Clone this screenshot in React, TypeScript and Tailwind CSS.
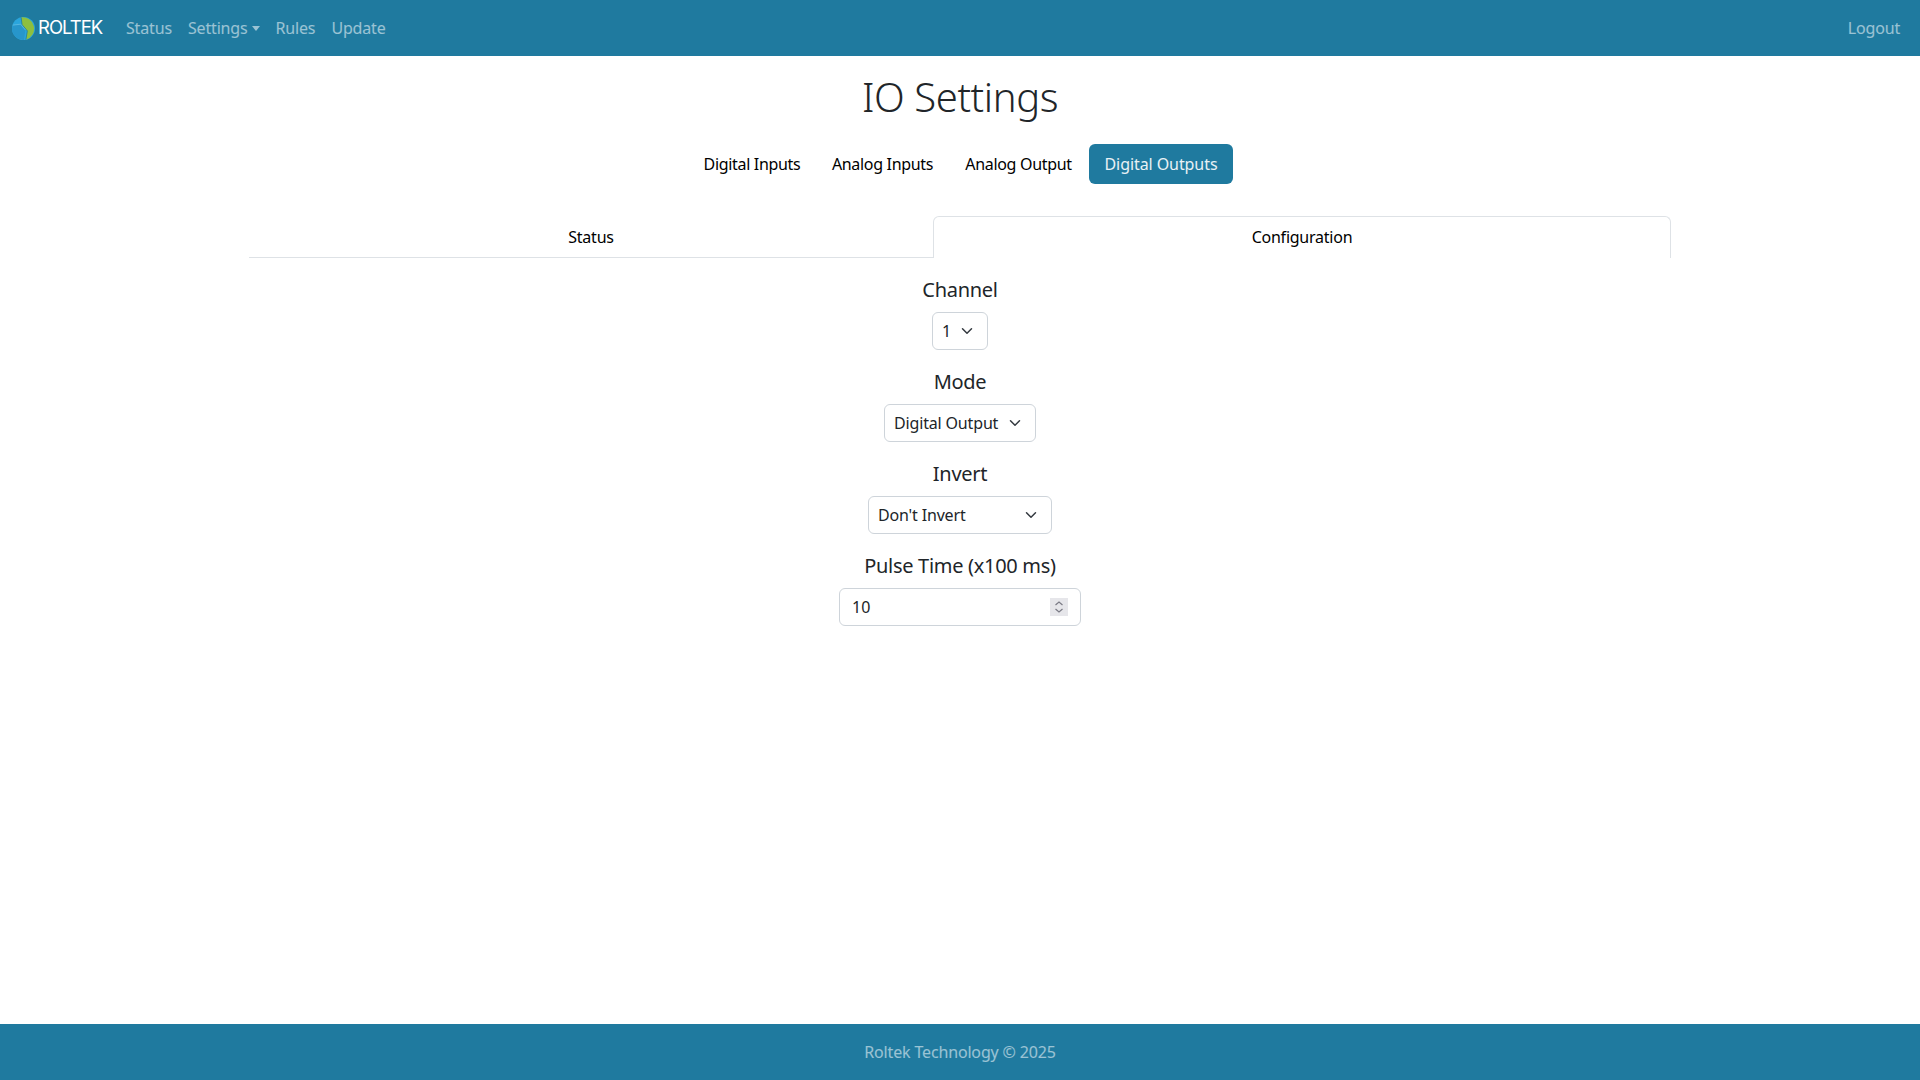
import React from "react";

const FONT = "font-['Noto_Sans','Open_Sans',sans-serif]";

function Chevron({ className = "" }: { className?: string }) {
  return (
    <svg viewBox="0 0 16 16" className={"w-4 h-3 " + className} fill="none" stroke="#343a40" strokeWidth="2" strokeLinecap="round" strokeLinejoin="round">
      <path d="m2 5 6 6 6-6" />
    </svg>
  );
}

function Logo() {
  return (
    <svg viewBox="0 0 24 24" className="w-[23px] h-[23px] shrink-0">
      <circle cx="12" cy="12" r="12" fill="#2aa5dc" />
      <path d="M0.8 8.5 9 7.5 14 13.5 12.5 24A12 12 0 0 1 0 12Z" fill="#2796cb" />
      <path d="M9.5 0.3A12 12 0 0 1 14.5 23.7L16 14.5 10.5 8Z" fill="#8dbf3f" />
      <path d="M9.5 0.3 10.5 8 16 14.5 14.5 23.7" fill="none" stroke="#1f7a9f" strokeWidth="0.8" />
      <path d="M0.8 8.5 9 7.5 14 13.5" fill="none" stroke="#6cc3e8" strokeWidth="0.7" />
    </svg>
  );
}

function NavLink({ children }: { children: React.ReactNode }) {
  return <a className="px-2 py-2 text-white/55 leading-6 text-base tracking-[-0.01em]">{children}</a>;
}

function Pill({ label, active, w }: { label: string; active?: boolean; w: string }) {
  return (
    <a className={"h-10 flex items-center justify-center rounded-md text-base " + w + " " + (active ? "bg-[#1f7a9f] text-white/90 tracking-[-0.005em]" : "text-black tracking-[-0.02em]")}>
      {label}
    </a>
  );
}

function Field({ label, children }: { label: string; children: React.ReactNode }) {
  return (
    <div className="flex flex-col items-center mb-4">
      <label className="text-xl leading-[30px] pt-[1px] mb-[7px] tracking-[-0.015em] text-[#212529]">{label}</label>
      {children}
    </div>
  );
}

function Select({ value, w }: { value: string; w: string }) {
  return (
    <div className={"h-[38px] flex items-center justify-between pl-[9px] pr-[12px] border border-[#ced4da] rounded-md text-base tracking-[-0.01em] text-[#212529] bg-white " + w}>
      <span>{value}</span>
      <Chevron />
    </div>
  );
}

export default function App() {
  return (
    <div className={"min-h-screen h-[1080px] flex flex-col bg-white " + FONT}>
      <nav className="h-14 bg-[#1f7a9f] flex items-center pl-3 pr-3 shrink-0">
        <a className="flex items-center mr-2">
          <Logo />
          <span className="text-white text-[18.5px] ml-[3px] tracking-[-1px] font-['Inter',sans-serif] font-normal w-[64px]">ROLTEK</span>
        </a>
        <div className="flex items-center ml-2">
          <NavLink>Status</NavLink>
          <a className="px-2 py-2 text-white/55 leading-6 text-base tracking-[-0.01em] flex items-center">
            Settings
            <span className="ml-[4px] w-0 h-0 border-x-[4.5px] border-x-transparent border-t-[5px] border-t-white/55" />
          </a>
          <NavLink>Rules</NavLink>
          <NavLink>Update</NavLink>
        </div>
        <div className="ml-auto">
          <NavLink>Logout</NavLink>
        </div>
      </nav>

      <main className="flex-1 flex flex-col items-center pt-4">
        <h1 className="text-[40px] leading-[48px] pt-[1px] mb-[23px] font-light tracking-[-0.01em] text-[#212529]">IO Settings</h1>
        <div className="flex items-center">
          <Pill label="Digital Inputs" w="w-[130px]" />
          <Pill label="Analog Inputs" w="w-[131px]" />
          <Pill label="Analog Output" w="w-[141px]" />
          <Pill label="Digital Outputs" w="w-[144px]" active />
        </div>
        <div className="mt-8 w-[1422px] flex">
          <div className="flex-1 h-[42px] flex items-center justify-center text-base tracking-[-0.015em] text-black border-b border-[#dee2e6]">Status</div>
          <div className="w-[738px] h-[42px] flex items-center justify-center pb-[2px] text-base tracking-[-0.015em] text-black border border-b-0 border-[#dee2e6] rounded-t-md">Configuration</div>
        </div>
        <div className="pt-4 flex flex-col items-center w-full">
          <Field label="Channel"><Select value="1" w="w-[56px]" /></Field>
          <Field label="Mode"><Select value="Digital Output" w="w-[152px]" /></Field>
          <Field label="Invert"><Select value="Don't Invert" w="w-[184px]" /></Field>
          <Field label="Pulse Time (x100 ms)">
            <div className="relative w-[242px] h-[38px]">
              <input type="text" readOnly value="10" className="w-full h-full pl-[12px] border border-[#ced4da] rounded-md text-base text-[#212529] outline-none" />
              <span className="absolute right-[13px] top-[10px] w-[18px] h-[18px] bg-[#e6e6ea] flex items-center justify-center">
                <svg viewBox="0 0 10 14" className="w-[10px] h-[14px]" fill="none" stroke="#7a7a85" strokeWidth="1.2">
                  <path d="m1.5 5 3.5-3 3.5 3M1.5 9l3.5 3 3.5-3" />
                </svg>
              </span>
            </div>
          </Field>
        </div>
      </main>

      <footer className="h-14 bg-[#1f7a9f] flex items-center justify-center text-white/55 text-base tracking-[-0.01em] shrink-0">
        Roltek Technology © 2025
      </footer>
    </div>
  );
}
